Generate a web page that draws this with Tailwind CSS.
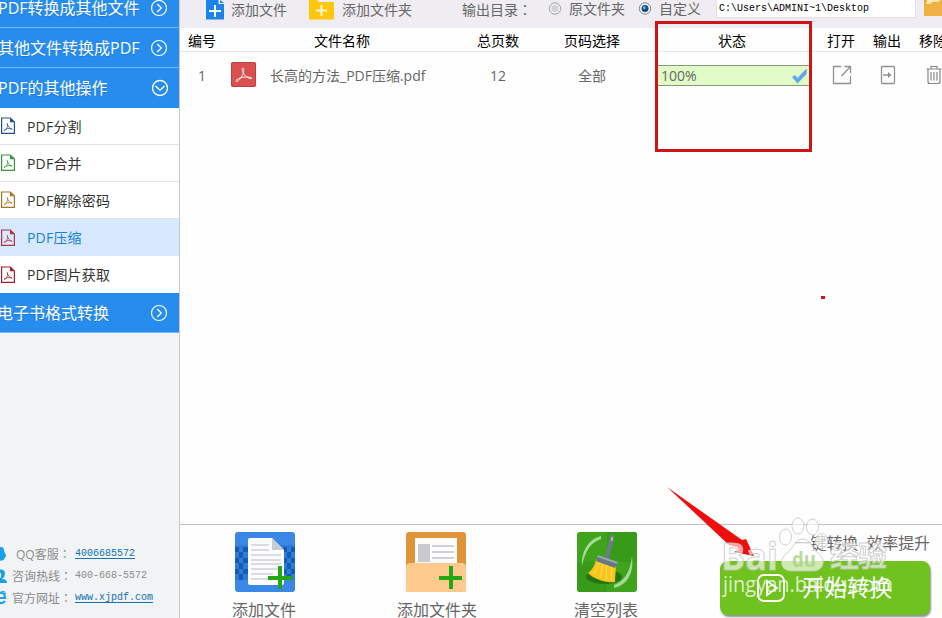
<!DOCTYPE html>
<html lang="zh-CN">
<head>
  <meta charset="UTF-8" />
  <meta name="viewport" content="width=device-width, initial-scale=1" />
  <title>PDF转换器</title>
  <script src="https://cdn.jsdelivr.net/npm/@tailwindcss/browser@4"></script>
</head>
<body class="bg-white font-['Open_Sans','Noto_Sans_CJK_SC',sans-serif] text-[14px] text-[#666]">
  <!-- shared icons -->
  <svg class="hidden">
    <symbol id="pdf" viewBox="0 0 16 18">
      <path d="M1.6 1H10.3L14.4 5V16.4H1.6Z" fill="none" stroke="currentColor" stroke-width="1.2" />
      <path d="M10 1V5.3H14.4Z" fill="currentColor" />
      <path d="M7.2 6.5C8 9 7.500 12 4 13.500C6 11.500 9.500 11 12.200 12.200C10 11.800 8 10 7.200 6.500Z" fill="none" stroke="currentColor" stroke-width=".8" />
    </symbol>
    <symbol id="right" viewBox="0 0 18 18">
      <circle cx="9" cy="9" r="7.5" fill="none" stroke="currentColor" stroke-width="1.2" />
      <path d="M7.3 5L11.3 9L7.3 13" fill="none" stroke="currentColor" stroke-width="1.3" />
    </symbol>
    <symbol id="down" viewBox="0 0 18 18">
      <circle cx="9" cy="9" r="7.5" fill="none" stroke="currentColor" stroke-width="1.4" />
      <path d="M4.500 7L9 11.2L13.500 7" fill="none" stroke="currentColor" stroke-width="1.4" />
    </symbol>
  </svg>

  <div class="relative flex h-[618px] w-[942px] overflow-hidden">
    <!-- sidebar -->
    <aside class="flex w-[180px] shrink-0 flex-col border-r border-[#c5c8d0] bg-[#f1f3f5]">
      <nav>
        <div class="-mt-3 flex h-10 items-center justify-between border-b border-[#78b7f6] bg-[#268cee] pr-[11px] text-[16px] whitespace-nowrap text-white text-shadow-2xs">
          <span class="-ml-0.5">PDF转换成其他文件</span><svg class="size-[18px] shrink-0"><use href="#right" /></svg>
        </div>
        <div class="flex h-10 items-center justify-between border-b border-[#78b7f6] bg-[#268cee] pr-[11px] text-[16px] whitespace-nowrap text-white text-shadow-2xs">
          <span class="-ml-0.5">其他文件转换成PDF</span><svg class="size-[18px] shrink-0"><use href="#right" /></svg>
        </div>
        <div class="flex h-10 items-center justify-between bg-[#268cee] pr-[10px] text-[16px] whitespace-nowrap text-white text-shadow-2xs">
          <span class="-ml-0.5">PDF的其他操作</span><svg class="size-[18px] shrink-0"><use href="#down" /></svg>
        </div>
        <ul class="bg-white tracking-[.2px] text-[#333]">
          <li class="flex h-[37px] items-center gap-[11px] border-b border-[#e4e4e8]"><svg class="h-[18px] w-4 text-[#24528e]"><use href="#pdf" /></svg>PDF分割</li>
          <li class="flex h-[37px] items-center gap-[11px] border-b border-[#e4e4e8]"><svg class="h-[18px] w-4 text-[#37923c]"><use href="#pdf" /></svg>PDF合并</li>
          <li class="flex h-[37px] items-center gap-[11px] border-b border-[#e4e4e8]"><svg class="h-[18px] w-4 text-[#a87424]"><use href="#pdf" /></svg>PDF解除密码</li>
          <li class="flex h-[37px] items-center gap-[11px] bg-[#d8e9fd] text-[#1683d0]"><svg class="h-[18px] w-4 text-[#b13445]"><use href="#pdf" /></svg>PDF压缩</li>
          <li class="flex h-[37px] items-center gap-[11px]"><svg class="h-[18px] w-4 text-[#a01e2e]"><use href="#pdf" /></svg>PDF图片获取</li>
        </ul>
        <div class="flex h-10 items-center justify-between border-b border-[#78b7f6] bg-[#268cee] pr-[11px] text-[16px] whitespace-nowrap text-white text-shadow-2xs">
          <span class="-ml-[3px]">电子书格式转换</span><svg class="size-[18px] shrink-0"><use href="#right" /></svg>
        </div>
      </nav>

      <div class="mt-auto mb-[9px] text-[12px] leading-[22px] whitespace-nowrap text-[#8c8c8c]">
        <div class="flex h-[22px] items-center">
          <svg class="h-4 w-[16px]" viewBox="0 0 16 16"><path d="M-3 1H1C4 1 4 4 4.5 6C6 9 7 11 5 11C5 14 2 15-3 15Z" fill="#18a0e8" /></svg>
          <span class="w-[59px]">QQ客服<span class="font-['Noto_Sans_CJK_TC',sans-serif]" lang="zh-TW">：</span></span><a class="font-['Liberation_Mono',monospace] text-[10px] text-[#1472ae] underline underline-offset-2">4006685572</a>
        </div>
        <div class="flex h-[22px] items-center">
          <svg class="h-4 w-[12px]" viewBox="0 0 12 16"><path d="M-2 2Q5 0 5 6Q5 9 2 11Q7 11 7 15H-2V12L1 9V5H-2Z" fill="#18a0e8" /></svg>
          <span class="w-[63px]">咨询热线<span class="font-['Noto_Sans_CJK_TC',sans-serif]" lang="zh-TW">：</span></span><span class="font-['Liberation_Mono',monospace] text-[10px]">400-668-5572</span>
        </div>
        <div class="flex h-[22px] items-center">
          <svg class="h-4 w-[12px]" viewBox="0 0 12 16"><path d="M-3 8H5C5 1-3 1-4 8M-4 9C-3 14 3 14 5 11" fill="none" stroke="#18a0e8" stroke-width="2.2" /><path d="M1 2Q5 0 5.5 4" fill="none" stroke="#18a0e8" /></svg>
          <span class="w-[63px]">官方网址<span class="font-['Noto_Sans_CJK_TC',sans-serif]" lang="zh-TW">：</span></span><a class="font-['Liberation_Mono',monospace] text-[10px] text-[#1472ae] underline underline-offset-2">www.xjpdf.com</a>
        </div>
      </div>
    </aside>

    <main class="flex w-[762px] shrink-0 flex-col bg-[#fefefe]">
      <!-- toolbar -->
      <div class="flex h-7 items-start overflow-hidden bg-[#efedf1] leading-5 whitespace-nowrap">
        <svg class="ml-[26px] h-5 w-[18px] shrink-0" viewBox="0 0 18 20"><path d="M0 0H12.5V4H18V19.5H0Z" fill="#1c82ec" /><path d="M14 0V3H18Z" fill="#1c82ec" /><path d="M9 5V17M3 11H15" stroke="#fff" stroke-width="2" /></svg>
        <span class="ml-[7px] w-[78px]">添加文件</span>
        <svg class="h-5 w-[25px] shrink-0" viewBox="0 0 25 20"><path d="M0 0H8L10 2H25V19.5H0Z" fill="#fcc70d" /><path d="M12.500 5V16M7 10.500H18" stroke="#fff8d8" stroke-width="2" /></svg>
        <span class="ml-2 w-[120px]">添加文件夹</span>
        <span class="-mt-px w-[86px]">输出目录<span class="font-['Noto_Sans_CJK_TC',sans-serif]" lang="zh-TW">：</span></span>
        <svg class="mt-0.5 size-[14px] shrink-0" viewBox="0 0 14 14"><circle cx="7" cy="6.500" r="5.700" fill="#eee" stroke="#a2a2a2" /><circle cx="7" cy="6.500" r="3.500" fill="#d2d3d5" /></svg>
        <span class="-mt-px ml-[7px] w-[69px]">原文件夹</span>
        <svg class="mt-0.5 size-[14px] shrink-0" viewBox="0 0 14 14"><circle cx="7" cy="6.500" r="5.700" fill="#eee" stroke="#858b92" /><circle cx="7" cy="6.500" r="3.500" fill="#11527c" /><circle cx="6.300" cy="5.700" r="1.300" fill="#7ec5e8" /></svg>
        <span class="-mt-px ml-[7px] w-[57px]">自定义</span>
        <div class="-mt-1 h-[22px] w-[200px] shrink-0 border border-[#e2e2e2] bg-white pl-0.5 font-['Liberation_Mono',monospace] text-[10px] leading-[23px] text-black">C:\Users\ADMINI~1\Desktop</div>
        <svg class="ml-2 h-4 w-[18px] shrink-0" viewBox="0 0 18 16"><path d="M0 0H18V16H0Z" fill="#e9a632" /><path d="M0 3H12L18 0V16H0Z" fill="#efb044" /><path d="M3 0H17L14 2H9L6 4H2Z" fill="#fae7b2" /></svg>
      </div>

      <!-- file table -->
      <div class="grid h-6 w-[778px] grid-cols-[44px_236px_76px_112px_168px_50px_42px_50px] items-center border-b border-[#e2eaee] pt-px text-center text-black">
        <span>编号</span><span>文件名称</span><span>总页数</span><span>页码选择</span><span>状态</span><span>打开</span><span>输出</span><span>移除</span>
      </div>
      <div class="grid h-[47px] w-[778px] grid-cols-[44px_236px_76px_112px_168px_50px_42px_50px] items-center text-center">
        <span>1</span>
        <div class="flex items-center pl-[7px]">
          <svg class="-mt-0.5 size-[25px]" viewBox="0 0 25 25"><rect width="25" height="25" rx="2" fill="#d9504f" /><rect x=".5" y=".5" width="24" height="24" rx="1.500" fill="none" stroke="#b84342" /><path d="M11.500 6C13.500 5 13 10 11 14C8.500 19 4 21 5 18.500C7 16 14 14 20 15.500C22.500 17 18 17.500 15 14.500C12 11.500 10.500 7.500 11.500 6Z" fill="none" stroke="#fff" stroke-width=".9" /></svg>
          <span class="ml-[14px]">长高的方法_PDF压缩.pdf</span>
        </div>
        <span>12</span>
        <span>全部</span>
        <div class="ml-[10px] flex h-[21px] w-[151px] items-center justify-between border-y border-[#879878] bg-[#e1fbc8] pr-px pl-[3px]">
          <span>100%</span>
          <svg class="-mr-px h-4 w-[18px]" viewBox="0 0 18 16"><path d="M1 9L4 7L6.500 10L14 2L16 1L15.500 6L6.500 15.500Z" fill="#63a5eb" /></svg>
        </div>
        <svg class="-mt-0.5 ml-px h-5 w-5 justify-self-center text-[#919191]" viewBox="0 0 20 20" fill="none" stroke="currentColor" stroke-width="1.300"><path d="M9 1.500H1.500V18.500H18.500V11M12.500 1.500H18.500V8M18 2L9.500 11" /></svg>
        <svg class="-mt-0.5 ml-px h-5 w-4 justify-self-center text-[#919191]" viewBox="0 0 16 20" fill="none" stroke="currentColor" stroke-width="1.300"><path d="M1.500 7.500V2.500Q1.500 1.500 2.500 1.500H13.500Q14.500 1.500 14.500 2.500V17.500Q14.500 18.500 13.500 18.500H2.500Q1.500 18.500 1.500 17.500V12.500" /><path d="M1.500 7V13M3 10H10" /><path d="M8 7L11.500 10L8 13Z" fill="currentColor" stroke="none" /></svg>
        <svg class="-mt-0.5 ml-px h-5 w-4 justify-self-center text-[#858585]" viewBox="0 0 16 20" fill="none" stroke="currentColor" stroke-width="1.200"><path d="M.5 4H15.500M5 4V1.500H11V4M2 4V16.500Q2 18.500 4 18.500H12Q14 18.500 14 16.500V4M5 7V15.500M8 7V15.500M11 7V15.500" /></svg>
      </div>

      <!-- actions -->
      <div class="mt-auto flex h-[94px] border-t border-[#bfc0c4] pt-[7px] text-[16px] whitespace-nowrap">
        <div class="ml-[34px] flex w-[102px] flex-col items-center">
          <svg class="size-[60px] shrink-0" viewBox="0 0 60 60">
            <rect width="60" height="60" rx="3" fill="#3a87e5" />
            <path d="M0 13H60V48H0Z" fill="#2f7bdc" />
            <path d="M0 15H4V20H8V15H13V20H8V26H4V20H0ZM0 26H4V31H8V26H13V31H8V37H4V31H0ZM0 37H4V42H8V37H13V42H8V48H4V42H0ZM48 15H52V20H56V15H60V20H56V26H52V20H48ZM48 26H52V31H56V26H60V31H56V37H52V31H48ZM48 37H52V42H56V37H60V42H56V48H52V42H48Z" fill="#115eae" />
            <path d="M15 6H37L49 18V51Q49 53 47 53H15Q13 53 13 51V8Q13 6 15 6Z" fill="#fdfdfd" />
            <path d="M37 6L49 18H37Z" fill="#c9cbd2" />
            <path d="M16 13H34M16 18H34M16 23H46M16 28H46M16 32H46M16 37H46M16 42H38M16 47H36" stroke="#d0d0d5" stroke-width="1.500" />
            <path d="M45 34V57M33 46H57" stroke="#23a812" stroke-width="4" />
          </svg>
          <span class="mt-1.5 -ml-0.5">添加文件</span>
        </div>
        <div class="ml-[70px] flex w-[100px] flex-col items-center">
          <svg class="size-[60px] shrink-0" viewBox="0 0 60 60">
            <rect width="60" height="60" rx="3" fill="#df9439" />
            <path d="M9 6H51V35H9Z" fill="#fdfdfd" /><path d="M12 12H24V30H12Z" fill="#c9c9cf" />
            <path d="M26 14H48M26 20H48M26 26H48" stroke="#cfcfd5" stroke-width="2" />
            <path d="M0 33L3 31H57L60 33V58Q60 60 58 60H2Q0 60 0 58Z" fill="#fdc98d" />
            <path d="M45 34V57M33 46H56" stroke="#23a812" stroke-width="4" />
          </svg>
          <span class="mt-1.5 ml-0.5">添加文件夹</span>
        </div>
        <div class="ml-[70px] flex w-[102px] flex-col items-center">
          <svg class="size-[60px] shrink-0" viewBox="0 0 60 60">
            <rect width="60" height="60" rx="3" fill="#3fa31b" /><path d="M30 0H57Q60 0 60 3V30H30ZM0 30H30V60H3Q0 60 0 57Z" fill="#379a18" />
            <ellipse cx="27" cy="45" rx="18" ry="7" fill="#247612" />
            <path d="M5 34C4 19 12 7 24 4V7C14 10 8 19 5 34ZM55 24C57 42 50 53 37 56V53C47 49 53 41 55 24Z" fill="#a6d998" />
            <path d="M35 5L30 26" stroke="#6b7d85" stroke-width="4.500" stroke-linecap="round" />
            <path d="M35.500 5L34.500 9" stroke="#b7c5ca" stroke-width="1.500" />
            <path d="M19 27L39 32C39 38 38 45 38 50C28 51 17 47 11 41C16 37 18 33 19 27Z" fill="#f8c41d" />
            <path d="M22 31L17 42M26 32L23 46M30 33L29 48M35 34L34 49" stroke="#ffe25b" />
            <path d="M21 23L41 30L38 36L19 29Z" fill="#627781" /><path d="M21 23L41 30L40 32L20 25Z" fill="#94a5ac" />
          </svg>
          <span class="mt-1.5 -ml-0.5">清空列表</span>
        </div>
        <div class="ml-[62px] w-[210px]">
          <div class="text-right text-[16px] leading-[22px] tracking-[-.1px]">一键转换&nbsp; 效率提升</div>
          <div class="mt-[7px] flex h-[54px] items-center rounded-lg bg-[#70c21e] pl-[37px] text-[22.500px] text-white shadow-[1px_2px_2px_#8b9587]">
            <svg class="size-7" viewBox="0 0 28 28" fill="none" stroke="#fff" stroke-width="1.800"><rect x="1" y="1" width="26" height="26" rx="6" /><path d="M10 7L20 14L10 21Z" /></svg>
            <span class="ml-[17px]">开始转换</span>
          </div>
        </div>
      </div>
    </main>

    <!-- markup drawn over the window -->
    <div class="absolute top-[21px] left-[655px] h-[131px] w-[157px] border-3 border-[#cd1518]"></div>
    <div class="absolute top-[296px] left-[821px] h-[3px] w-1 bg-[#d31515]"></div>
    <svg class="absolute top-[480px] left-[660px]" width="282" height="138" viewBox="660 480 282 138">
      <path d="M667 487L742 540L746 539L754 556L734 552L739 550L737 547L729 545Z" fill="#ee0e0e" />
      <g fill="#fff" fill-opacity=".65" stroke="#c4c4c4" stroke-opacity=".8" stroke-width="1">
        <ellipse cx="785.500" cy="537" rx="6" ry="8" /><ellipse cx="798" cy="526" rx="6" ry="8" /><ellipse cx="812.500" cy="527" rx="6" ry="8" /><ellipse cx="821.500" cy="541" rx="6" ry="7.500" />
        <path d="M803 539C795 539 794 548 787 553C778 560 781 571 791 571H814C825 570 826 559 818 553C811 548 811 539 803 539Z" />
        <text x="721" y="570" textLength="57" lengthAdjust="spacingAndGlyphs" font-family="Open Sans" font-size="38" font-weight="700">Bai</text>
        <text x="830" y="567" textLength="57" font-family="Noto Sans CJK SC" font-size="29" font-weight="700">经验</text>
      </g>
      <text x="792" y="567" textLength="24" lengthAdjust="spacingAndGlyphs" font-family="Open Sans" font-size="21" font-weight="700" fill="#a9cf84" fill-opacity=".8">du</text>
      <text x="723" y="592" textLength="170" lengthAdjust="spacingAndGlyphs" font-family="Open Sans" font-size="21" fill="#fff" fill-opacity=".75">jingyan.baidu.com</text>
    </svg>
  </div>
</body>
</html>
